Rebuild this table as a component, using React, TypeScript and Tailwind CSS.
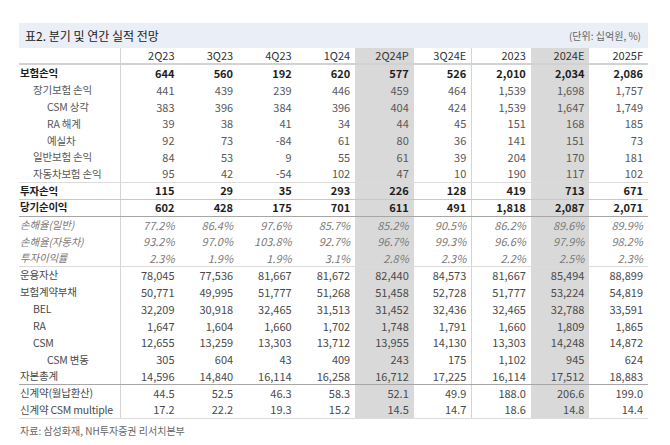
import React from "react";

type Row = {
  label: string;
  values: string[];
  indent?: 0 | 1 | 2;
  kind?: "bold" | "sub" | "ratio" | "plain";
  line?: "light" | "mid" | "dark";
};

const columns = ["2Q23", "3Q23", "4Q23", "1Q24", "2Q24P", "3Q24E", "2023", "2024E", "2025F"];
// 2Q24P and 2024E are shaded
const shaded = [4, 7];

const rows: Row[] = [
  { label: "보험손익", kind: "bold", values: ["644", "560", "192", "620", "577", "526", "2,010", "2,034", "2,086"] },
  { label: "장기보험 손익", indent: 1, kind: "sub", values: ["441", "439", "239", "446", "459", "464", "1,539", "1,698", "1,757"] },
  { label: "CSM 상각", indent: 2, kind: "sub", values: ["383", "396", "384", "396", "404", "424", "1,539", "1,647", "1,749"] },
  { label: "RA 해계", indent: 2, kind: "sub", values: ["39", "38", "41", "34", "44", "45", "151", "168", "185"] },
  { label: "예실차", indent: 2, kind: "sub", values: ["92", "73", "-84", "61", "80", "36", "141", "151", "73"] },
  { label: "일반보험 손익", indent: 1, kind: "sub", values: ["84", "53", "9", "55", "61", "39", "204", "170", "181"] },
  { label: "자동차보험 손익", indent: 1, kind: "sub", line: "light", values: ["95", "42", "-54", "102", "47", "10", "190", "117", "102"] },
  { label: "투자손익", kind: "bold", line: "mid", values: ["115", "29", "35", "293", "226", "128", "419", "713", "671"] },
  { label: "당기순이익", kind: "bold", line: "dark", values: ["602", "428", "175", "701", "611", "491", "1,818", "2,087", "2,071"] },
  { label: "손해율(일반)", kind: "ratio", values: ["77.2%", "86.4%", "97.6%", "85.7%", "85.2%", "90.5%", "86.2%", "89.6%", "89.9%"] },
  { label: "손해율(자동차)", kind: "ratio", values: ["93.2%", "97.0%", "103.8%", "92.7%", "96.7%", "99.3%", "96.6%", "97.9%", "98.2%"] },
  { label: "투자이익률", kind: "ratio", line: "light", values: ["2.3%", "1.9%", "1.9%", "3.1%", "2.8%", "2.3%", "2.2%", "2.5%", "2.3%"] },
  { label: "운용자산", values: ["78,045", "77,536", "81,667", "81,672", "82,440", "84,573", "81,667", "85,494", "88,899"] },
  { label: "보험계약부채", values: ["50,771", "49,995", "51,777", "51,268", "51,458", "52,728", "51,777", "53,224", "54,819"] },
  { label: "BEL", indent: 1, values: ["32,209", "30,918", "32,465", "31,513", "31,452", "32,436", "32,465", "32,788", "33,591"] },
  { label: "RA", indent: 1, values: ["1,647", "1,604", "1,660", "1,702", "1,748", "1,791", "1,660", "1,809", "1,865"] },
  { label: "CSM", indent: 1, values: ["12,655", "13,259", "13,303", "13,712", "13,955", "14,130", "13,303", "14,248", "14,872"] },
  { label: "CSM 변동", indent: 2, values: ["305", "604", "43", "409", "243", "175", "1,102", "945", "624"] },
  { label: "자본총계", line: "dark", values: ["14,596", "14,840", "16,114", "16,258", "16,712", "17,225", "16,114", "17,512", "18,883"] },
  { label: "신계약(월납환산)", values: ["44.5", "52.5", "46.3", "58.3", "52.1", "49.9", "188.0", "206.6", "199.0"] },
  { label: "신계약 CSM multiple", line: "light", values: ["17.2", "22.2", "19.3", "15.2", "14.5", "14.7", "18.6", "14.8", "14.4"] },
];

const lineClass = {
  light: "border-b border-[#dcdcdc]",
  mid: "border-b border-[#c8c8c8]",
  dark: "border-b border-[#a6a6a6]",
};

const textClass = {
  bold: "font-bold text-[#1e1e1e]",
  sub: "text-[#585858]",
  ratio: "italic text-[#7a7a7a]",
  plain: "text-[#4a4a4a]",
};

function DataRow({ row }: { row: Row }) {
  const kind = row.kind ?? "plain";
  const indent = row.indent === 2 ? "pl-[28px]" : row.indent === 1 ? "pl-[14px]" : "pl-[1px]";
  return (
    <div
      className={`grid grid-cols-[102px_repeat(9,minmax(0,1fr))] h-[16.85px] ${
        row.line ? lineClass[row.line] : ""
      } ${textClass[kind]}`}
    >
      <div
        className={`flex items-center whitespace-nowrap border-r border-[#d4d4d4] text-[10.5px] tracking-[-0.2px] ${indent}`}
      >
        {row.label}
      </div>
      {row.values.map((v, i) => (
        <div
          key={i}
          className={`flex items-center justify-end pr-[5px] ${shaded.includes(i) ? "bg-[#d9d9d9]" : ""} ${
            i === 5 ? "border-r border-[#d4d4d4]" : ""
          }`}
        >
          {v}
        </div>
      ))}
    </div>
  );
}

export default function App() {
  return (
    <div
      className="w-[670px] h-[445px] bg-white pt-[23px] pl-[19px] text-[11px] leading-none"
      style={{ fontFamily: '"Noto Sans CJK KR", "Noto Sans", sans-serif' }}
    >
      <div className="w-[629px]">
        <div className="flex items-center justify-between h-[25px] bg-[#e9eef7] pl-[6px] pr-[7px]">
          <span className="text-[12px] text-[#222]">표2. 분기 및 연간 실적 전망</span>
          <span className="text-[10px] text-[#666]">(단위: 십억원, %)</span>
        </div>

        <div className="grid grid-cols-[102px_repeat(9,minmax(0,1fr))] h-[17px] border-b-2 border-[#d2d2d2] text-[#333]">
          <div className="border-r border-[#d4d4d4]" />
          {columns.map((c, i) => (
            <div
              key={c}
              className={`flex items-center justify-end pr-[5px] ${shaded.includes(i) ? "bg-[#d9d9d9]" : ""} ${
                i === 5 ? "border-r border-[#d4d4d4]" : ""
              }`}
            >
              {c}
            </div>
          ))}
        </div>

        {rows.map((r) => (
          <DataRow key={r.label} row={r} />
        ))}

        <div className="pt-[7px] pl-[1px] text-[10px] text-[#666]">자료: 삼성화재, NH투자증권 리서치본부</div>
      </div>
    </div>
  );
}
